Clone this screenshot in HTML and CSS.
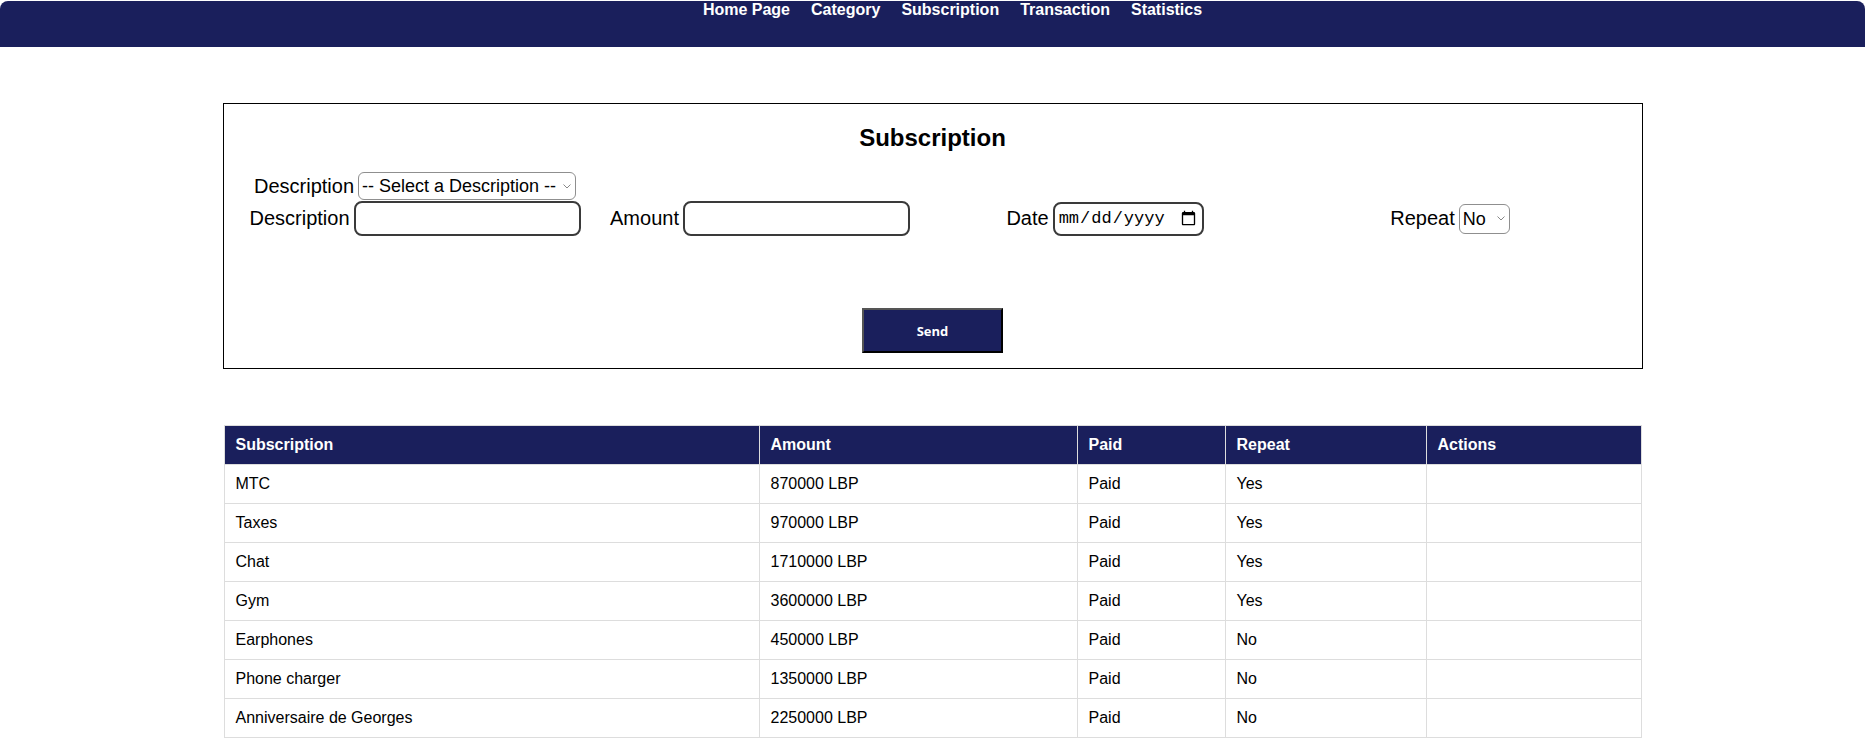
FILE: index.html
```html
<!DOCTYPE html>
<html lang="en">
<head>
<meta charset="utf-8">
<title>Subscription</title>
<link rel="stylesheet" href="styles.css">
</head>
<body>
<nav class="topnav">
  <ul class="nav-list">
    <li><a href="#">Home Page</a></li>
    <li><a href="#">Category</a></li>
    <li><a href="#">Subscription</a></li>
    <li><a href="#">Transaction</a></li>
    <li><a href="#">Statistics</a></li>
  </ul>
</nav>

<main class="content">
  <form class="sub-form">
    <h2 class="form-title">Subscription</h2>
    <div class="field-grid">
      <div class="field">
        <label>Description</label>
        <select class="sel sel-desc">
          <option>-- Select a Description --</option>
        </select>
      </div>
      <div class="field"></div>
      <div class="field"></div>
      <div class="field"></div>

      <div class="field">
        <label>Description</label>
        <input type="text" class="txt">
      </div>
      <div class="field">
        <label>Amount</label>
        <input type="text" class="txt">
      </div>
      <div class="field">
        <label>Date</label>
        <input type="date" class="txt date">
      </div>
      <div class="field">
        <label>Repeat</label>
        <select class="sel sel-repeat">
          <option>No</option>
          <option>Yes</option>
        </select>
      </div>
    </div>
    <div class="actions">
      <button type="button" class="send-btn">Send</button>
    </div>
  </form>

  <table class="sub-table">
    <colgroup>
      <col class="c1"><col class="c2"><col class="c3"><col class="c4"><col class="c5">
    </colgroup>
    <thead>
      <tr><th>Subscription</th><th>Amount</th><th>Paid</th><th>Repeat</th><th>Actions</th></tr>
    </thead>
    <tbody>
      <tr><td>MTC</td><td>870000 LBP</td><td>Paid</td><td>Yes</td><td></td></tr>
      <tr><td>Taxes</td><td>970000 LBP</td><td>Paid</td><td>Yes</td><td></td></tr>
      <tr><td>Chat</td><td>1710000 LBP</td><td>Paid</td><td>Yes</td><td></td></tr>
      <tr><td>Gym</td><td>3600000 LBP</td><td>Paid</td><td>Yes</td><td></td></tr>
      <tr><td>Earphones</td><td>450000 LBP</td><td>Paid</td><td>No</td><td></td></tr>
      <tr><td>Phone charger</td><td>1350000 LBP</td><td>Paid</td><td>No</td><td></td></tr>
      <tr><td>Anniversaire de Georges</td><td>2250000 LBP</td><td>Paid</td><td>No</td><td></td></tr>
    </tbody>
  </table>
</main>
</body>
</html>
```

FILE: styles.css
```css
html, body {
  margin: 0;
  padding: 0;
  background: #ffffff;
}

body {
  font-family: "Liberation Sans", Arial, sans-serif;
  color: #000;
}

.topnav {
  margin-top: 1px;
  height: 46px;
  background: #1a1f5c;
  border-radius: 8px 8px 0 0;
}

.nav-list {
  list-style: none;
  margin: 0;
  padding: 0 0 0 40px;
  display: flex;
  justify-content: center;
}

.nav-list li a {
  display: block;
  padding: 0 10.5px;
  line-height: 17px;
  color: #fff;
  font-weight: bold;
  font-size: 16px;
  text-decoration: none;
}

.content {
  padding-top: 56px;
}

.sub-form {
  box-sizing: border-box;
  width: 1420px;
  margin: 0 auto;
  border: 1px solid #000;
  padding: 20px 19px 15px;
}

.form-title {
  margin: 0 0 20px;
  font-size: 24px;
  line-height: 28px;
  text-align: center;
  font-weight: bold;
}

.field-grid {
  display: grid;
  grid-template-columns: repeat(4, 1fr);
  row-gap: 1px;
}

.field {
  display: flex;
  justify-content: center;
  align-items: center;
  gap: 4px;
}

.field label {
  font-size: 20px;
}

.sel {
  -webkit-appearance: none;
  appearance: none;
  box-sizing: border-box;
  font-family: "Liberation Sans", Arial, sans-serif;
  font-size: 18px;
  border: 1px solid #8f8f8f;
  border-radius: 6px;
  color: #000;
  padding: 0 14px 0 3px;
  background-color: #fff;
  background-image: url("data:image/svg+xml,%3Csvg xmlns='http://www.w3.org/2000/svg' width='8' height='5' viewBox='0 0 8 5'%3E%3Cpath d='M0.5 0.5 L4 4 L7.5 0.5' fill='none' stroke='%23888' stroke-width='1'/%3E%3C/svg%3E");
  background-repeat: no-repeat;
  background-position: right 4px center;
  background-size: 8px 5px;
}

.sel-desc {
  width: 218px;
  height: 28px;
}

.sel-repeat {
  width: 51px;
  height: 30px;
}

.txt {
  box-sizing: border-box;
  width: 227px;
  height: 35px;
  border: 2px solid #3a3a3a;
  border-radius: 8px;
  background: #fff;
  font-size: 18px;
}

.date {
  width: 151px;
  height: 34px;
  font-family: "Liberation Mono", "DejaVu Sans Mono", monospace;
  font-size: 17px;
  padding: 0 3px;
}

.actions {
  display: flex;
  justify-content: center;
  margin-top: 72px;
}

.send-btn {
  width: 141px;
  height: 45px;
  background: #1a1f5c;
  color: #fff;
  font-family: "Open Sans", "DejaVu Sans", sans-serif;
  font-weight: bold;
  font-size: 13px;
  border: 2px outset #555;
  border-right-color: #000;
  border-bottom-color: #000;
}

.sub-table {
  width: 1418px;
  margin: 56px auto 0;
  border-collapse: collapse;
  font-size: 16px;
}

.sub-table .c1 { width: 535px; }
.sub-table .c2 { width: 318px; }
.sub-table .c3 { width: 148px; }
.sub-table .c4 { width: 201px; }
.sub-table .c5 { width: 215px; }

.sub-table th,
.sub-table td {
  border: 1px solid #dddddd;
  padding: 10px 11px;
  text-align: left;
  line-height: 18px;
}

.sub-table th {
  background: #1a1f5c;
  color: #fff;
  font-weight: bold;
}
```
